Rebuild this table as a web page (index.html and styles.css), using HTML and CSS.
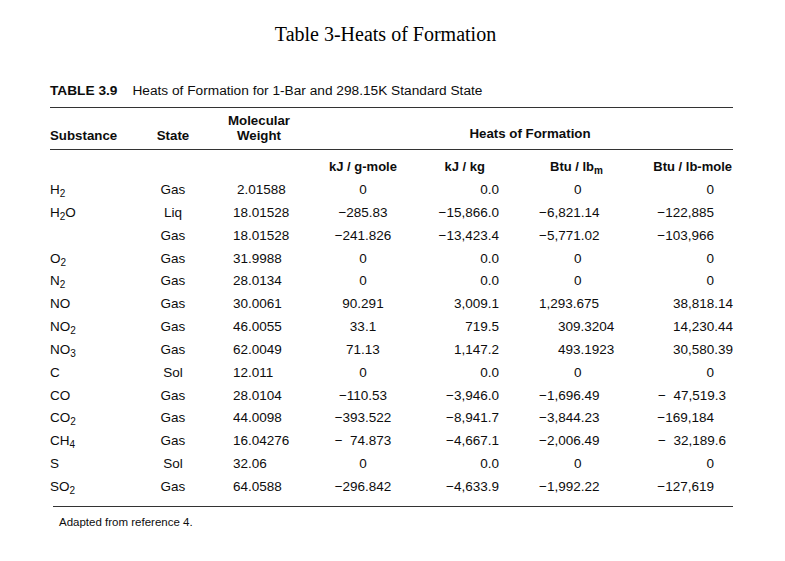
FILE: index.html
```html
<!DOCTYPE html>
<html>
<head>
<meta charset="utf-8">
<link rel="stylesheet" href="styles.css">
</head>
<body>
<div class="page">
  <h1 class="title">Table 3-Heats of Formation</h1>
  <div class="tbl">
    <div class="caption"><b>TABLE 3.9</b><span>Heats of Formation for 1-Bar and 298.15K Standard State</span></div>
    <div class="rule"></div>
    <div class="grid head">
      <div class="h-sub">Substance</div>
      <div class="h-state">State</div>
      <div class="h-mw">Molecular<br>Weight</div>
      <div class="h-heats">Heats of Formation</div>
    </div>
    <div class="rule"></div>
    <div class="grid subhead">
      <div></div><div></div><div></div>
      <div class="c4">kJ / g-mole</div>
      <div class="c5 sh5">kJ / kg</div>
      <div class="sh6">Btu / lb<sub>m</sub></div>
      <div class="c7 sh7">Btu / lb-mole</div>
    </div>
    <div class="grid rows">
      <div>H<sub>2</sub></div><div class="c2">Gas</div><div class="c3 in1">2.01588</div><div class="c4">0</div><div class="c5">0.0</div><div class="c6 z6">0</div><div class="c7 r19">0</div>
      <div>H<sub>2</sub>O</div><div class="c2">Liq</div><div class="c3">18.01528</div><div class="c4">−285.83</div><div class="c5">−15,866.0</div><div class="c6">−6,821.14</div><div class="c7 r19">−122,885</div>
      <div></div><div class="c2">Gas</div><div class="c3">18.01528</div><div class="c4">−241.826</div><div class="c5">−13,423.4</div><div class="c6">−5,771.02</div><div class="c7 r19">−103,966</div>
      <div>O<sub>2</sub></div><div class="c2">Gas</div><div class="c3">31.9988</div><div class="c4">0</div><div class="c5">0.0</div><div class="c6 z6">0</div><div class="c7 r19">0</div>
      <div>N<sub>2</sub></div><div class="c2">Gas</div><div class="c3">28.0134</div><div class="c4">0</div><div class="c5">0.0</div><div class="c6 z6">0</div><div class="c7 r19">0</div>
      <div>NO</div><div class="c2">Gas</div><div class="c3">30.0061</div><div class="c4">90.291</div><div class="c5">3,009.1</div><div class="c6">1,293.675</div><div class="c7">38,818.14</div>
      <div>NO<sub>2</sub></div><div class="c2">Gas</div><div class="c3">46.0055</div><div class="c4">33.1</div><div class="c5">719.5</div><div class="c6 p6">309.3204</div><div class="c7">14,230.44</div>
      <div>NO<sub>3</sub></div><div class="c2">Gas</div><div class="c3">62.0049</div><div class="c4">71.13</div><div class="c5">1,147.2</div><div class="c6 p6">493.1923</div><div class="c7">30,580.39</div>
      <div>C</div><div class="c2">Sol</div><div class="c3">12.011</div><div class="c4">0</div><div class="c5">0.0</div><div class="c6 z6">0</div><div class="c7 r19">0</div>
      <div>CO</div><div class="c2">Gas</div><div class="c3">28.0104</div><div class="c4">−110.53</div><div class="c5">−3,946.0</div><div class="c6">−1,696.49</div><div class="c7 r7">−  47,519.3</div>
      <div>CO<sub>2</sub></div><div class="c2">Gas</div><div class="c3">44.0098</div><div class="c4">−393.522</div><div class="c5">−8,941.7</div><div class="c6">−3,844.23</div><div class="c7 r19">−169,184</div>
      <div>CH<sub>4</sub></div><div class="c2">Gas</div><div class="c3">16.04276</div><div class="c4">−  74.873</div><div class="c5">−4,667.1</div><div class="c6">−2,006.49</div><div class="c7 r7">−  32,189.6</div>
      <div>S</div><div class="c2">Sol</div><div class="c3">32.06</div><div class="c4">0</div><div class="c5">0.0</div><div class="c6 z6">0</div><div class="c7 r19">0</div>
      <div>SO<sub>2</sub></div><div class="c2">Gas</div><div class="c3">64.0588</div><div class="c4">−296.842</div><div class="c5">−4,633.9</div><div class="c6">−1,992.22</div><div class="c7 r19">−127,619</div>
    </div>
    <div class="rule rule-end"></div>
    <div class="note">Adapted from reference 4.</div>
  </div>
</div>
</body>
</html>
```

FILE: styles.css
```css
html, body {
  margin: 0;
  padding: 0;
  background: #ffffff;
}

.page {
  width: 785px;
}

.title {
  margin: 0;
  padding: 22px 14px 0 0;
  font-family: "Liberation Serif", "Times New Roman", serif;
  font-weight: normal;
  font-size: 20px;
  line-height: 24px;
  text-align: center;
  color: #000;
}

.tbl {
  margin: 37px 0 0 50px;
  width: 683px;
  font-family: "Liberation Sans", Arial, sans-serif;
  font-size: 13.5px;
  color: #0d0d0d;
}

.caption {
  display: flex;
  gap: 15px;
  line-height: 16px;
  font-size: 13.7px;
}

.caption b {
  font-weight: bold;
}

.rule {
  border-top: 1.5px solid #333333;
  height: 0;
}

.caption + .rule {
  margin-top: 8px;
}

.rule-end {
  margin-left: 3px;
  margin-top: 7px;
}

.grid {
  display: grid;
  grid-template-columns: 90px 66px 106px 102px 85px 121px 113px;
  white-space: pre;
}

.head {
  padding: 5px 0 6px;
  grid-template-rows: 30px;
  font-weight: bold;
  font-size: 13.3px;
  line-height: 15px;
}

.head > div {
  align-self: end;
}

.h-state {
  text-align: center;
}

.h-mw {
  text-align: center;
}

.h-heats {
  grid-column: 4 / 8;
  text-align: center;
  padding-left: 15px;
  padding-bottom: 2px;
}

.subhead {
  margin-top: 5px;
  grid-template-rows: 24px;
  line-height: 24px;
  font-weight: bold;
  font-size: 13px;
}

.rows {
  grid-auto-rows: 22.85px;
  line-height: 22.85px;
}

sub {
  font-size: 10px;
  line-height: 0;
  vertical-align: -3px;
}

.c2 { text-align: center; }
.c3 { padding-left: 27px; }
.in1 { padding-left: 31px; }
.c4 { text-align: center; }
.c5 { text-align: right; }
.c6 { padding-left: 40px; }
.z6 { padding-left: 75px; }
.p6 { padding-left: 59px; }
.c7 { text-align: right; }
.r19 { padding-right: 19px; }
.r7 { padding-right: 7px; }

.sh5 { padding-right: 14px; }
.sh6 { padding-left: 51px; }
.sh7 { padding-right: 1px; }

.note {
  margin-top: 7px;
  padding-left: 9px;
  font-size: 11.5px;
  line-height: 16px;
}
```
